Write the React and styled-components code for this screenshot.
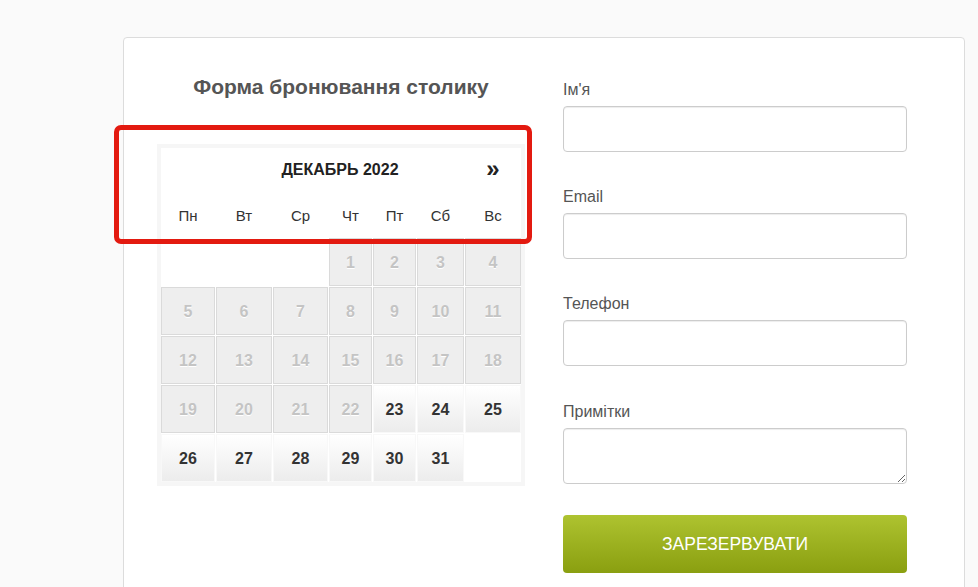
import React from "react";
import styled, { createGlobalStyle } from "styled-components";

const Global = createGlobalStyle`
  html, body { margin: 0; padding: 0; background: #fafafa; }
  body { font-family: "Liberation Sans", Arial, sans-serif; }
  * { box-sizing: border-box; }
`;

const Page = styled.div`
  padding: 37px 0 0 123px;
  height: 587px;
  overflow: hidden;
`;

const Card = styled.div`
  width: 842px;
  min-height: 600px;
  background: #fff;
  border: 1px solid #dcdcdc;
  border-radius: 4px;
  padding: 37px 0 0 33px;
  display: flex;
  gap: 38px;
`;

const LeftCol = styled.div`
  position: relative;
  width: 368px;
  display: flex;
  flex-direction: column;
`;

const Title = styled.h2`
  margin: 0 0 45px;
  height: 24px;
  line-height: 24px;
  font-size: 21px;
  font-weight: bold;
  color: #555;
  text-align: center;
`;

const cols = "54px 56px 55px 43px 43px 47px 56px";

const Calendar = styled.div`
  width: 368px;
  border: 4px solid #f6f6f6;
  background: #fff;
`;

const HeadRow = styled.div`
  display: grid;
  grid-template-columns: ${cols};
  column-gap: 1px;
  height: ${(p) => p.$h}px;
  align-items: center;
`;

const MonthTitle = styled.div`
  grid-column: 2 / 7;
  text-align: center;
  font-size: 16px;
  font-weight: bold;
  color: #222;
`;

const Next = styled.div`
  grid-column: 7;
  text-align: center;
  font-size: 24px;
  font-weight: bold;
  color: #222;
  line-height: 1;
  padding-bottom: 2px;
`;

const DayName = styled.div`
  text-align: center;
  font-size: 15px;
  color: #333;
`;

const Days = styled.div`
  display: grid;
  grid-template-columns: ${cols};
  grid-auto-rows: 48px;
  gap: 1px;
`;

const Cell = styled.div`
  display: flex;
  align-items: center;
  justify-content: center;
  padding-top: 2px;
  font-size: 16px;
  font-weight: bold;
  ${(p) =>
    p.$empty
      ? `background: #fff;`
      : p.$disabled
      ? `background: #eeeeee; border: 1px solid #dadada; color: #c4c4c4; text-shadow: 0 1px 0 #fff;`
      : `background: linear-gradient(#ffffff, #ececec); border: 1px solid #f8f8f8; color: #333;`}
`;

const RightCol = styled.div`
  width: 344px;
  padding-top: 5px;
  display: flex;
  flex-direction: column;
`;

const Group = styled.div`
  display: flex;
  flex-direction: column;
  margin-bottom: ${(p) => p.$mb}px;
`;

const Label = styled.label`
  font-size: 16px;
  line-height: 20px;
  color: #555;
  margin-bottom: ${(p) => p.$mb || 6}px;
`;

const Input = styled.input`
  width: 344px;
  height: 46px;
  border: 1px solid #cccccc;
  border-radius: 4px;
  box-shadow: inset 0 1px 1px rgba(0, 0, 0, 0.075);
  padding: 6px 12px;
  font-size: 15px;
  font-family: inherit;
  outline: none;
`;

const TextArea = styled.textarea`
  width: 344px;
  height: 56px;
  border: 1px solid #cccccc;
  border-radius: 4px;
  box-shadow: inset 0 1px 1px rgba(0, 0, 0, 0.075);
  padding: 6px 12px;
  font-size: 15px;
  font-family: inherit;
  resize: vertical;
  outline: none;
  display: block;
`;

const Button = styled.button`
  width: 344px;
  height: 58px;
  border: none;
  border-radius: 4px;
  background: linear-gradient(#aec330, #8a9f10);
  color: #fff;
  font-family: inherit;
  font-size: 17.5px;
  text-transform: uppercase;
  cursor: pointer;
`;

const Highlight = styled.div`
  position: absolute;
  left: -43px;
  top: 50px;
  width: 418px;
  height: 119px;
  border: 5px solid #e31a10;
  border-radius: 7px;
  pointer-events: none;
`;

const dayNames = ["Пн", "Вт", "Ср", "Чт", "Пт", "Сб", "Вс"];

function buildCells() {
  const cells = [];
  for (let i = 0; i < 3; i++) cells.push({ empty: true });
  for (let d = 1; d <= 31; d++) cells.push({ d, disabled: d < 23 });
  cells.push({ empty: true });
  return cells;
}

export default function App() {
  const cells = buildCells();
  return (
    <>
      <Global />
      <Page>
        <Card>
          <LeftCol>
            <Title>Форма бронювання столику</Title>
            <Calendar>
              <HeadRow $h={44}>
                <MonthTitle>ДЕКАБРЬ 2022</MonthTitle>
                <Next>»</Next>
              </HeadRow>
              <HeadRow $h={46}>
                {dayNames.map((n) => (
                  <DayName key={n}>{n}</DayName>
                ))}
              </HeadRow>
              <Days>
                {cells.map((c, i) => (
                  <Cell key={i} $empty={c.empty} $disabled={c.disabled}>
                    {c.d}
                  </Cell>
                ))}
              </Days>
            </Calendar>
            <Highlight />
          </LeftCol>
          <RightCol>
            <Group $mb={35}>
              <Label>Ім'я</Label>
              <Input type="text" />
            </Group>
            <Group $mb={35}>
              <Label>Email</Label>
              <Input type="email" />
            </Group>
            <Group $mb={36}>
              <Label>Телефон</Label>
              <Input type="tel" />
            </Group>
            <Group $mb={31}>
              <Label>Примітки</Label>
              <TextArea />
            </Group>
            <Button>Зарезервувати</Button>
          </RightCol>
        </Card>
      </Page>
    </>
  );
}
